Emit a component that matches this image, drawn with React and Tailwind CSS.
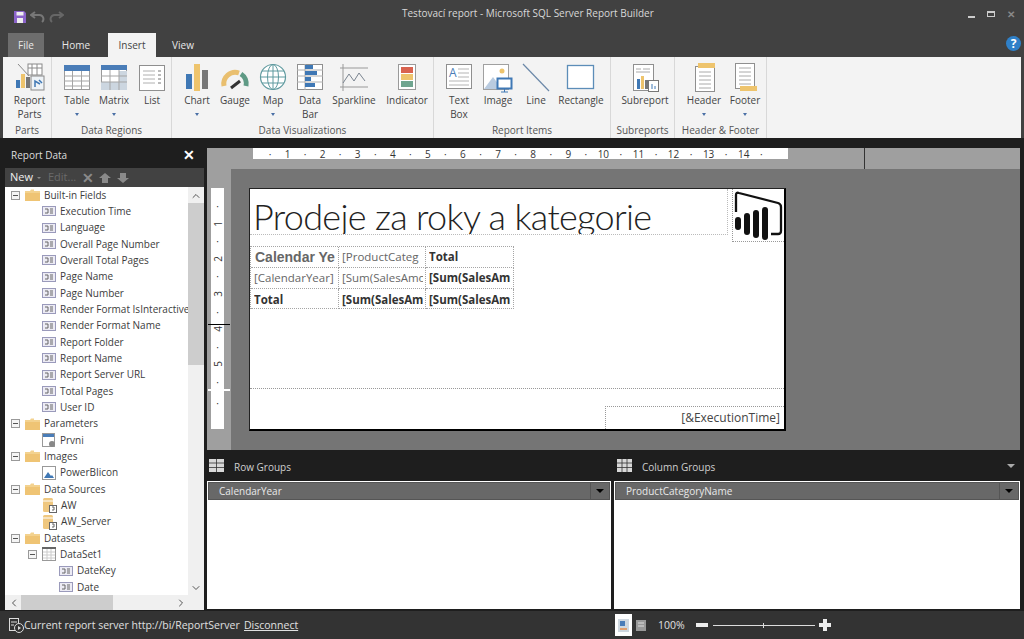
import { ChevronUp, ChevronDown, ChevronLeft, ChevronRight } from 'lucide-react';

const font = { fontFamily: '"Open Sans", "Noto Sans", sans-serif' };

// ribbon icons, all drawn on a 30x28 box
const RibbonIcons = {
    parts: (
        <>
            <path d="M3 1l11 12" stroke="#8a8a8a" fill="none" />
            <rect x="13" y="1" width="14" height="11" fill="#fff" stroke="#8a8a8a" />
            <path d="M13 5h14M17 1v11M22 1v11" stroke="#8a8a8a" />
            <rect x="1" y="17" width="4" height="8" fill="#3f78b5" />
            <rect x="6" y="11" width="4" height="14" fill="#eec46d" />
            <rect x="11" y="14" width="4" height="11" fill="#777" />
            <rect x="16" y="13" width="13" height="14" fill="#eef3f7" stroke="#8a8a8a" />
            <path d="M20 24v-6l5 3M24 17l3 3" stroke="#3f78b5" fill="none" strokeWidth="1.5" />
        </>
    ),
    table: (
        <>
            <rect x="2.5" y="2.5" width="25" height="24" fill="#fff" stroke="#9a9a9a" />
            <rect x="2" y="2" width="26" height="6" fill="#4a7db8" />
            <path d="M2 13h26M2 18h26M2 23h26M10.5 8v18M19.5 8v18" stroke="#a5a5a5" />
        </>
    ),
    matrix: (
        <>
            <rect x="2.5" y="2.5" width="25" height="24" fill="#fff" stroke="#9a9a9a" />
            <rect x="20" y="8" width="8" height="19" fill="#ccd6e0" />
            <rect x="2" y="19" width="26" height="8" fill="#ccd6e0" />
            <rect x="2" y="2" width="26" height="5" fill="#4a7db8" />
            <path d="M2 13h26M2 19h26M11 7v20M20 7v20" stroke="#a5a5a5" />
        </>
    ),
    list: (
        <>
            <rect x="2.5" y="2.5" width="25" height="25" fill="#fff" stroke="#8f8f8f" />
            <path d="M6 8h12M6 12h12M6 16h12M6 20h12" stroke="#b0b0b0" />
            <path d="M21 8h3M21 12h3M21 16h3M21 20h3" stroke="#777" />
        </>
    ),
    chart: (
        <>
            <rect x="4" y="11" width="6" height="15" fill="#3f78b5" />
            <rect x="12" y="1" width="6" height="27" fill="#eec46d" />
            <rect x="20" y="7" width="6" height="19" fill="#777" />
        </>
    ),
    gauge: (
        <>
            <path d="M4 23a11.500 11.500 0 0 1 15-13" stroke="#e9bf6f" strokeWidth="5" fill="none" />
            <path d="M21 11a11.500 11.500 0 0 1 5 12" stroke="#5f9a85" strokeWidth="5" fill="none" />
            <path d="M11 25l9-7" stroke="#333" strokeWidth="3" />
        </>
    ),
    map: (
        <>
            <circle cx="15" cy="14" r="12.500" fill="#fff" stroke="#5f9a9f" strokeWidth="1.200" />
            <ellipse cx="15" cy="14" rx="5.500" ry="12.500" fill="none" stroke="#5f9a9f" />
            <path d="M2.500 14h25M4 8h22M4 20h22M15 1.500v25" stroke="#5f9a9f" />
        </>
    ),
    databar: (
        <>
            <rect x="2.500" y="1.500" width="25" height="25" fill="#fff" stroke="#8f8f8f" />
            <path d="M10 1v26M2 7h26M2 13h26M2 19h26" stroke="#b0b0b0" />
            <rect x="10" y="2" width="8" height="4" fill="#3f78b5" />
            <rect x="10" y="8" width="12" height="4" fill="#3f78b5" />
            <rect x="10" y="14" width="6" height="4" fill="#3f78b5" />
            <rect x="10" y="20" width="10" height="4" fill="#3f78b5" />
        </>
    ),
    sparkline: (
        <>
            <path d="M4 1v27M1 5h28M1 24h28" stroke="#999" fill="none" />
            <path d="M4 20l6-9 5 7 5-8 6 8" stroke="#7a8490" fill="none" />
        </>
    ),
    indicator: (
        <>
            <rect x="6.500" y="1.500" width="17" height="25" fill="#fff" stroke="#9a9a9a" />
            <rect x="9" y="4" width="12" height="6" fill="#d9634f" />
            <rect x="9" y="11" width="12" height="6" fill="#eec46d" />
            <rect x="9" y="18" width="12" height="6" fill="#6fa58f" />
        </>
    ),
    textbox: (
        <>
            <rect x="2.500" y="1.500" width="25" height="24" fill="#fff" stroke="#8f8f8f" />
            <text x="5" y="14" fontSize="12" fill="#4a7db8" fontFamily="Open Sans">A</text>
            <path d="M14 6h11M14 10h11M14 14h11M5 18h20M5 22h20" stroke="#b5b5b5" />
        </>
    ),
    image: (
        <>
            <rect x="0.500" y="1.500" width="25" height="25" fill="#fff" stroke="#a0a0a0" />
            <circle cx="19" cy="8" r="2.500" fill="#eec46d" />
            <path d="M1 26l9-12 9 12z" fill="#b9cbe0" />
            <rect x="14.500" y="15.500" width="14" height="10" fill="#fff" stroke="#3f78b5" strokeWidth="2" />
            <path d="M21.500 26v3M18 29h7" stroke="#3f78b5" />
        </>
    ),
    line: <path d="M2 1l26 27" stroke="#6b88a8" strokeWidth="1.200" />,
    rectangle: <rect x="1.500" y="2.500" width="26" height="23" fill="#fff" stroke="#5c8db8" strokeWidth="1.300" />,
    subreport: (
        <>
            <rect x="3.500" y="1.500" width="20" height="26" fill="#fff" stroke="#8f8f8f" />
            <path d="M6 6h5M13 6h7M6 9h14" stroke="#aaa" />
            <rect x="7" y="16" width="3" height="10" fill="#3f78b5" />
            <rect x="11" y="13" width="3" height="13" fill="#eec46d" />
            <rect x="15" y="17" width="3" height="9" fill="#777" />
            <rect x="18.500" y="17.500" width="10" height="11" fill="#fff" stroke="#777" />
            <path d="M22 26v-5M25 26v-3" stroke="#3f78b5" />
        </>
    ),
    header: (
        <>
            <rect x="6.500" y="3.500" width="19" height="25" fill="#fff" stroke="#8f8f8f" />
            <rect x="9" y="0" width="17" height="5" fill="#eec46d" />
            <path d="M10 9h12M10 13h12M10 17h12M10 21h12M10 25h12" stroke="#aaa" />
        </>
    ),
    footer: (
        <>
            <rect x="5.500" y="0.500" width="19" height="25" fill="#fff" stroke="#8f8f8f" />
            <rect x="10" y="23" width="17" height="5" fill="#eec46d" />
            <path d="M9 5h12M9 9h12M9 13h12M9 17h12M9 21h12" stroke="#aaa" />
        </>
    ),
};

const ribbonGroups = [
    { label: 'Parts', width: 'w-[49px]', pad: 'pl-[2px]', items: [
        { icon: 'parts', lines: ['Report', 'Parts'], w: 'w-[49px]' },
    ] },
    { label: 'Data Regions', width: 'w-[120px]', pad: 'pl-[7px]', items: [
        { icon: 'table', lines: ['Table'], w: 'w-[36px]', caret: true },
        { icon: 'matrix', lines: ['Matrix'], w: 'w-[38px]', caret: true },
        { icon: 'list', lines: ['List'], w: 'w-[38px]' },
    ] },
    { label: 'Data Visualizations', width: 'w-[262px]', pad: 'pl-[6px]', items: [
        { icon: 'chart', lines: ['Chart'], w: 'w-[38px]', caret: true },
        { icon: 'gauge', lines: ['Gauge'], w: 'w-[38px]' },
        { icon: 'map', lines: ['Map'], w: 'w-[38px]', caret: true },
        { icon: 'databar', lines: ['Data', 'Bar'], w: 'w-[36px]' },
        { icon: 'sparkline', lines: ['Sparkline'], w: 'w-[52px]' },
        { icon: 'indicator', lines: ['Indicator'], w: 'w-[54px]' },
    ] },
    { label: 'Report Items', width: 'w-[177px]', pad: 'pl-[6px]', items: [
        { icon: 'textbox', lines: ['Text', 'Box'], w: 'w-[38px]' },
        { icon: 'image', lines: ['Image'], w: 'w-[40px]' },
        { icon: 'line', lines: ['Line'], w: 'w-[36px]' },
        { icon: 'rectangle', lines: ['Rectangle'], w: 'w-[54px]' },
    ] },
    { label: 'Subreports', width: 'w-[64px]', pad: 'pl-[2px]', items: [
        { icon: 'subreport', lines: ['Subreport'], w: 'w-[64px]' },
    ] },
    { label: 'Header & Footer', width: 'w-[92px]', pad: 'pl-[8px]', items: [
        { icon: 'header', lines: ['Header'], w: 'w-[42px]', caret: true },
        { icon: 'footer', lines: ['Footer'], w: 'w-[40px]', caret: true },
    ] },
];

const treeRows = [
    { text: 'Built-in Fields', kind: 'folder', level: 0 },
    { text: 'Execution Time', kind: 'field', level: 1 },
    { text: 'Language', kind: 'field', level: 1 },
    { text: 'Overall Page Number', kind: 'field', level: 1 },
    { text: 'Overall Total Pages', kind: 'field', level: 1 },
    { text: 'Page Name', kind: 'field', level: 1 },
    { text: 'Page Number', kind: 'field', level: 1 },
    { text: 'Render Format IsInteractive', kind: 'field', level: 1 },
    { text: 'Render Format Name', kind: 'field', level: 1 },
    { text: 'Report Folder', kind: 'field', level: 1 },
    { text: 'Report Name', kind: 'field', level: 1 },
    { text: 'Report Server URL', kind: 'field', level: 1 },
    { text: 'Total Pages', kind: 'field', level: 1 },
    { text: 'User ID', kind: 'field', level: 1 },
    { text: 'Parameters', kind: 'folder', level: 0 },
    { text: 'Prvni', kind: 'param', level: 1 },
    { text: 'Images', kind: 'folder', level: 0 },
    { text: 'PowerBIicon', kind: 'picture', level: 1 },
    { text: 'Data Sources', kind: 'folder', level: 0 },
    { text: 'AW', kind: 'source', level: 1 },
    { text: 'AW_Server', kind: 'source', level: 1 },
    { text: 'Datasets', kind: 'folder', level: 0 },
    { text: 'DataSet1', kind: 'dataset', level: 1 },
    { text: 'DateKey', kind: 'field', level: 2 },
    { text: 'Date', kind: 'field', level: 2 },
];

function RibbonButton({ item }) {
    return (
        <div className={`${item.w} flex flex-col items-center shrink-0`}>
            <svg width="30" height="30" viewBox="0 0 30 30" className="mt-[6px] shrink-0">{RibbonIcons[item.icon]}</svg>
            <div className="mt-[1px] text-[10px] leading-[13.500px] text-[#444] text-center whitespace-nowrap">
                {item.lines.map(l => <div key={l}>{l}</div>)}
                {item.caret && <div className="flex justify-center pt-[5px]"><div className="w-0 h-0 border-x-[2.500px] border-x-transparent border-t-[3px] border-t-[#4a6fa5]" /></div>}
            </div>
        </div>
    );
}

function RibbonGroup({ group }) {
    return (
        <div className={`${group.width} h-full flex flex-col border-r border-[#d8d8d8] shrink-0`}>
            <div className={`flex flex-1 ${group.pad}`}>
                {group.items.map(item => <RibbonButton key={item.icon} item={item} />)}
            </div>
            <div className="h-[16px] text-[10px] leading-[16px] text-[#555] text-center whitespace-nowrap">{group.label}</div>
        </div>
    );
}

function Expander() {
    return (
        <div className="w-[9px] h-[9px] border border-[#999] bg-[#f5f5f5] flex items-center justify-center shrink-0">
            <div className="w-[5px] h-px bg-[#555]" />
        </div>
    );
}

function TreeIcon({ kind }) {
    if (kind === 'folder') {
        return (
            <svg width="15" height="12" viewBox="0 0 15 12" className="shrink-0">
                <path d="M0 2h5l1-1.500h3V2h6v10H0z" fill="#f3d28f" />
                <path d="M0 4h15v8H0z" fill="#efc474" />
            </svg>
        );
    }
    if (kind === 'param') {
        return (
            <svg width="14" height="15" viewBox="0 0 14 15" className="shrink-0">
                <rect x="0.500" y="0.500" width="12" height="13" fill="#fff" stroke="#999" />
                <rect x="1" y="1" width="11" height="3" fill="#4a7db8" />
                <circle cx="10" cy="11" r="3" fill="#888" />
            </svg>
        );
    }
    if (kind === 'picture') {
        return (
            <svg width="14" height="14" viewBox="0 0 14 14" className="shrink-0">
                <rect x="0.500" y="0.500" width="13" height="13" fill="#fff" stroke="#999" />
                <path d="M2 12l4-6 3 4 1-1 2 3z" fill="#3f78b5" />
            </svg>
        );
    }
    if (kind === 'source') {
        return (
            <svg width="15" height="16" viewBox="0 0 15 16" className="shrink-0">
                <rect x="1" y="1" width="10" height="14" rx="1.500" fill="#efc77f" />
                <path d="M1 4h10" stroke="#fff" />
                <rect x="7.500" y="8.500" width="7" height="7" fill="#fff" stroke="#666" />
                <path d="M10 10h2v3h-2" stroke="#666" fill="none" />
            </svg>
        );
    }
    if (kind === 'dataset') {
        return (
            <svg width="14" height="14" viewBox="0 0 14 14" className="shrink-0">
                <rect x="0.500" y="0.500" width="13" height="13" fill="#fff" stroke="#999" />
                <rect x="0" y="0" width="14" height="2" fill="#666" />
                <path d="M1 5h12M1 8h12M1 11h12M5 2v11M9 2v11" stroke="#ccc" />
            </svg>
        );
    }
    return (
        <svg width="14" height="10" viewBox="0 0 14 10" className="shrink-0">
            <rect x="0.500" y="0.500" width="13" height="9" fill="#ecebf4" stroke="#9a9abb" />
            <path d="M3 3h3v4H3M8 3h3M8 5h3M8 7h3" stroke="#666" fill="none" />
        </svg>
    );
}

function TreeRow({ row }) {
    const pad = row.level === 2 ? 'pl-[54px]' : row.level === 1 ? 'pl-[37px]' : 'pl-[6px]';
    return (
        <div className={`h-[16.330px] flex items-center text-[10px] text-[#3c3c3c] whitespace-nowrap ${pad}`}>
            {row.level === 0 && <div className="mr-[5px]"><Expander /></div>}
            {row.kind === 'dataset' && <div className="absolute left-[23px]"><Expander /></div>}
            <TreeIcon kind={row.kind} />
            <span className="ml-[4px]">{row.text}</span>
        </div>
    );
}

function ReportDataPanel() {
    return (
        <div className="w-[199px] ml-[5px] shrink-0 flex flex-col">
            <div className="h-[30px] flex items-center justify-between pl-[6px] pr-[9px] pt-[4px]">
                <span className="text-[10px] text-[#ddd]">Report Data</span>
                <span className="text-[#fff] text-[14px] font-bold leading-none">✕</span>
            </div>
            <div className="h-[19px] bg-[#424242] flex items-center pl-[5px] text-[11px]">
                <span className="text-[#eee]">New</span>
                <span className="ml-[4px] w-0 h-0 border-x-[2px] border-x-transparent border-t-[2px] border-t-[#888]" />
                <span className="ml-[7px] text-[#6a6a6a]">Edit...</span>
                <span className="ml-[6px] text-[#8a8a8a] text-[14px] font-bold leading-none">✕</span>
                <svg width="12" height="10" viewBox="0 0 12 10" className="ml-[5px]"><path d="M6 0l6 5H9v5H3V5H0z" fill="#8a8a8a" /></svg>
                <svg width="12" height="10" viewBox="0 0 12 10" className="ml-[6px]"><path d="M6 10l6-5H9V0H3v5H0z" fill="#8a8a8a" /></svg>
            </div>
            <div className="bg-white h-[423px] flex flex-col overflow-hidden">
                <div className="flex flex-1 min-h-0">
                    <div className="relative w-[183px] overflow-hidden">
                        {treeRows.map(row => <TreeRow key={row.text} row={row} />)}
                    </div>
                    <div className="w-[16px] bg-[#f0f0f0] flex flex-col items-center">
                        <ChevronUp size={12} strokeWidth={2} className="text-[#555] mt-[2px] h-[14px]" />
                        <div className="w-full h-[162px] bg-[#cdcdcd] shrink-0" />
                        <div className="flex-1" />
                        <ChevronDown size={12} strokeWidth={2} className="text-[#555] mb-[1px]" />
                    </div>
                </div>
                <div className="h-[15px] bg-[#f0f0f0] flex items-center justify-between shrink-0">
                    <div className="flex items-center h-full">
                        <ChevronLeft size={12} strokeWidth={2} className="text-[#555] ml-[2px] w-[14px]" />
                        <div className="h-full w-[92px] bg-[#cdcdcd]" />
                    </div>
                    <ChevronRight size={12} strokeWidth={2} className="text-[#555] mr-[17px]" />
                </div>
            </div>
        </div>
    );
}

function HorizontalRuler() {
    const nums = Array.from({ length: 14 }, (_, i) => i + 1);
    return (
        <div className="w-[535px] h-[11px] bg-white flex items-center pl-[8.200px] text-[10px] text-[#333] leading-none">
            {nums.map(n => (
                <div key={n} className="w-[35.100px] flex shrink-0">
                    <span className="w-[17.550px] text-center">·</span>
                    <span className="w-[17.550px] text-center">{n}</span>
                </div>
            ))}
            <span className="w-[17.550px] text-center">·</span>
        </div>
    );
}

function VerticalRuler() {
    const cells = [1, 2, 3, 4, 5];
    return (
        <div className="w-[13px] h-[241px] bg-white flex flex-col items-center text-[10px] text-[#333] leading-none pt-[9.500px]">
            {cells.map(n => (
                <div key={n} className="h-[35.100px] flex flex-col items-center shrink-0">
                    <span className="h-[17.550px] flex items-center">·</span>
                    <span className="h-[17.550px] flex items-center -rotate-90">{n}</span>
                </div>
            ))}
            <span className="h-[17.550px] flex items-center">·</span>
            <span className="h-[25px] flex items-center">·</span>
        </div>
    );
}

function PowerBiLogo() {
    return (
        <svg width="50" height="51" viewBox="0 0 50 51">
            <path d="M2 22V5q0-3 3-2L44 13q3 1 3 4v24q0 3-3 3h-7" fill="none" stroke="#111" strokeWidth="2.300" />
            <rect x="1" y="27" width="6" height="13" rx="3" fill="#111" />
            <rect x="10" y="23" width="6" height="22" rx="3" fill="#111" />
            <rect x="19" y="20" width="6" height="28" rx="3" fill="#111" />
            <rect x="28" y="17" width="6" height="33" rx="3" fill="#111" />
        </svg>
    );
}

function TablixCell({ children, w, className = '' }) {
    return (
        <div className={`${w} h-full pl-[3px] pr-[2px] flex items-center border-r border-b border-dotted border-[#a5a5a5] text-[11.500px] ${className}`}>
            <div className="w-full overflow-hidden whitespace-nowrap">{children}</div>
        </div>
    );
}

function Tablix() {
    return (
        <div className="mt-[4px] w-[264px] border-t border-l border-dotted border-[#a5a5a5]">
            <div className="flex h-[21px]">
                <TablixCell w="w-[88px]" className="font-bold text-[#666] pl-[4px]"><span className="text-[14px]" style={{ fontFamily: '"Liberation Sans", sans-serif' }}>Calendar Ye</span></TablixCell>
                <TablixCell w="w-[87px]" className="text-[#666]">[ProductCateg</TablixCell>
                <TablixCell w="w-[88px]" className="font-bold text-[#333]">Total</TablixCell>
            </div>
            <div className="flex h-[21px]">
                <TablixCell w="w-[88px]" className="text-[#666]">[CalendarYear]</TablixCell>
                <TablixCell w="w-[87px]" className="text-[#666]">[Sum(SalesAmo</TablixCell>
                <TablixCell w="w-[88px]" className="font-bold text-[#333]">[Sum(SalesAm</TablixCell>
            </div>
            <div className="flex h-[20px]">
                <TablixCell w="w-[88px]" className="font-bold text-[#333] pt-[3px]">Total</TablixCell>
                <TablixCell w="w-[87px]" className="font-bold text-[#333] pt-[3px]">[Sum(SalesAm</TablixCell>
                <TablixCell w="w-[88px]" className="font-bold text-[#333] pt-[3px]">[Sum(SalesAm</TablixCell>
            </div>
        </div>
    );
}

function ReportPage() {
    return (
        <div className="w-[537px] h-[243px] bg-white border-t border-l border-[#222] border-r-2 border-b-2 border-r-black border-b-black shrink-0 flex flex-col overflow-hidden">
            <div className="h-[200px] border-b border-dotted border-[#999] shrink-0">
                <div className="flex items-start">
                    <div className="w-[479px] h-[46px] overflow-hidden border-b border-r border-dotted border-[#bbb] pl-[3px] whitespace-nowrap text-[#222] text-[36px] tracking-[-0.680px] leading-[54px] font-light" style={{ fontFamily: 'Lato, sans-serif' }}>
                        Prodeje za roky a kategorie
                    </div>
                    <div className="ml-[4px] w-[52px] h-[53px] border-b border-l border-dotted border-[#999] flex items-center justify-center">
                        <PowerBiLogo />
                    </div>
                </div>
                <Tablix />
            </div>
            <div className="flex-1 flex justify-end items-end">
                <div className="w-[179px] h-[23px] border-t border-l border-dotted border-[#999] text-right pr-[4px] text-[12px] leading-[22px] text-[#444]">[&ExecutionTime]</div>
            </div>
        </div>
    );
}

function Designer() {
    return (
        <div className="w-[813px] h-[305px] mt-[7px] ml-[3px] bg-[#9f9f9f] flex flex-col shrink-0 overflow-hidden">
            <div className="h-[24px] flex items-start shrink-0 relative border-t-[3px] border-[#1e1e1e]">
                <div className="ml-[46px]"><HorizontalRuler /></div>
                <div className="absolute left-[657px] top-0 w-px h-[21px] bg-[#333]" />
            </div>
            <div className="flex flex-1 min-h-0">
                <div className="w-[24px] relative shrink-0 pt-[19px] pl-[4px]">
                    <VerticalRuler />
                    <div className="absolute left-[1px] top-[155px] w-[22px] h-px bg-black" />
                    <div className="absolute left-[1px] top-[220px] w-[22px] h-[2px] bg-white" />
                </div>
                <div className="flex-1 bg-[#757575] pt-[19px] pl-[18px]">
                    <ReportPage />
                </div>
            </div>
        </div>
    );
}

function GroupIcon({ columns }) {
    return (
        <svg width="15" height="13" viewBox="0 0 15 13" className="shrink-0">
            <rect width="15" height="13" fill="#d8d8d8" />
            {columns
                ? <path d="M5 0v13M10 0v13M0 4h15M0 8.500h15" stroke="#333" strokeWidth="0.800" />
                : <path d="M0 4h15M0 8.500h15M7.500 0v13" stroke="#333" strokeWidth="0.800" />}
        </svg>
    );
}

function GroupBox({ name, className }) {
    return (
        <div className={`bg-white h-[128px] p-px ${className}`}>
            <div className="h-[18px] bg-[#686868] border border-[#555] flex items-center text-[10px] text-[#e8e8e8]">
                <span className="ml-[10px] flex-1">{name}</span>
                <div className="w-[19px] h-full border-l border-[#555] flex items-center justify-center">
                    <div className="w-0 h-0 border-x-[4px] border-x-transparent border-t-[4px] border-t-black" />
                </div>
            </div>
        </div>
    );
}

export default function App() {
    return (
        <div className="w-[1024px] h-[639px] overflow-hidden bg-[#1e1e1e] flex flex-col" style={font}>
            {/* title bar */}
            <div className="h-[33px] bg-[#414141] grid grid-cols-[402px_auto_1fr] items-center shrink-0">
                <div className="flex items-center pl-[14px] gap-[4px]">
                    <svg width="12" height="12" viewBox="0 0 12 12"><path d="M0 0h10l2 2v10H0z" fill="#8a63c9" /><rect x="2.500" y="1" width="7" height="3.500" fill="#eee" /><rect x="3" y="7" width="6" height="5" fill="#eee" /></svg>
                    <svg width="15" height="13" viewBox="0 0 15 13"><path d="M5 2L1 5l4 3M1 5h8a4 4 0 0 1 3 7" fill="none" stroke="#777" strokeWidth="2" /></svg>
                    <svg width="15" height="13" viewBox="0 0 15 13"><path d="M10 2l4 3-4 3M14 5H6a4 4 0 0 0-3 7" fill="none" stroke="#666" strokeWidth="2" /></svg>
                </div>
                <div className="text-[10px] text-[#d8d8d8] pb-[6px]">Testovací report - Microsoft SQL Server Report Builder</div>
                <div className="flex items-center justify-end pr-[9px] gap-[12px] pb-[6px]">
                    <div className="w-[7px] h-[2px] bg-[#ccc] mt-[6px]" />
                    <div className="w-[8px] h-[6px] border border-[#ccc] border-t-2" />
                    <span className="text-[#888] text-[10px] font-bold leading-none">✕</span>
                </div>
            </div>

            {/* ribbon tabs */}
            <div className="h-[24px] bg-[#414141] flex items-end pl-[8px] shrink-0 text-[10px] text-[#e8e8e8] relative">
                <div className="w-[36px] h-[24px] bg-[#6d6d6d] flex items-center justify-center">File</div>
                <div className="w-[64px] h-[24px] flex items-center justify-center">Home</div>
                <div className="w-[48px] h-[24px] bg-[#f3f3f3] text-[#444] flex items-center justify-center">Insert</div>
                <div className="w-[54px] h-[24px] flex items-center justify-center">View</div>
                <div className="absolute right-[3px] top-[3px] w-[15px] h-[15px] rounded-full bg-[#2f80c8] text-white text-[12px] font-bold leading-[15px] text-center">?</div>
            </div>

            {/* ribbon */}
            <div className="h-[81px] bg-[#414141] px-[3px] shrink-0">
                <div className="h-full bg-[#f3f3f3] flex">
                    {ribbonGroups.map(g => <RibbonGroup key={g.label} group={g} />)}
                </div>
            </div>

            {/* workspace */}
            <div className="flex flex-1 min-h-0 h-[473px]">
                <ReportDataPanel />
                <div className="flex flex-col w-[817px] shrink-0">
                    <Designer />
                    <div className="h-[31px] flex items-center ml-[3px] text-[10px] text-[#cfcfcf] shrink-0">
                        <div className="w-[407px] flex items-center pl-[2px]">
                            <GroupIcon />
                            <span className="ml-[10px] pt-[4px]">Row Groups</span>
                        </div>
                        <div className="flex-1 flex items-center pl-[3px]">
                            <GroupIcon columns />
                            <span className="ml-[10px] pt-[4px]">Column Groups</span>
                        </div>
                        <div className="w-0 h-0 mr-[6px] border-x-[4px] border-x-transparent border-t-[4px] border-t-[#aaa]" />
                    </div>
                    <div className="flex ml-[3px] gap-[3px]">
                        <GroupBox name="CalendarYear" className="w-[404px]" />
                        <GroupBox name="ProductCategoryName" className="w-[406px]" />
                    </div>
                </div>
            </div>

            {/* status bar */}
            <div className="h-[28px] bg-[#333333] flex items-center text-[10.500px] text-[#e0e0e0] shrink-0 whitespace-nowrap">
                <svg width="16" height="16" viewBox="0 0 16 16" className="ml-[8px] shrink-0">
                    <rect x="1.500" y="1.500" width="9" height="12" fill="none" stroke="#ddd" />
                    <path d="M3 5h6M3 8h3" stroke="#ddd" />
                    <circle cx="11" cy="11" r="4.500" fill="#333" stroke="#ddd" />
                    <path d="M10 9l3 2-3 2z" fill="#ddd" />
                </svg>
                <span className="w-[220px] shrink-0 pt-[1px]">Current report server http://bi/ReportServer</span>
                <span className="w-[371px] shrink-0 pt-[1px]"><span className="underline">Disconnect</span></span>
                <div className="w-[17px] h-[22px] bg-white flex items-center justify-center shrink-0">
                    <svg width="11" height="13" viewBox="0 0 11 13"><rect width="11" height="13" fill="#cfd8e0" /><rect x="2" y="2" width="5" height="5" fill="#4a7db8" /><rect x="2" y="9" width="7" height="2" fill="#e0a070" /></svg>
                </div>
                <svg width="10" height="11" viewBox="0 0 10 11" className="ml-[4px] shrink-0"><rect width="10" height="11" fill="#999" /><path d="M2 3h6M2 6h6" stroke="#ddd" /></svg>
                <span className="ml-[12px] w-[38px] shrink-0 pt-[2px]">100%</span>
                <div className="w-[12px] h-[4px] bg-[#eee] shrink-0" />
                <div className="relative ml-[5px] w-[102px] h-px bg-[#ddd] shrink-0">
                    <div className="absolute left-[50px] -top-[2px] w-px h-[5px] bg-[#ddd]" />
                </div>
                <svg width="12" height="12" viewBox="0 0 12 12" className="ml-[4px] shrink-0"><path d="M4 0h4v4h4v4H8v4H4V8H0V4h4z" fill="#eee" /></svg>
            </div>
        </div>
    );
}
